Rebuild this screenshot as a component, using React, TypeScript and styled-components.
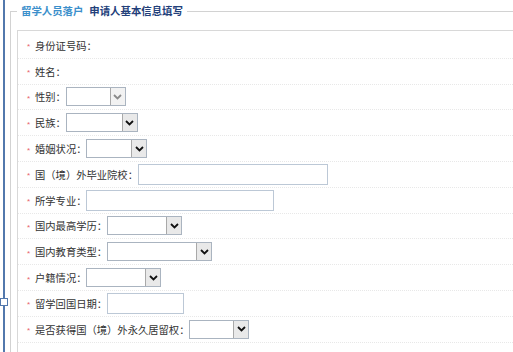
import styled, { createGlobalStyle } from "styled-components";

type Field = {
  label: string;
  kind?: "select" | "input";
  width?: number;
  muted?: boolean;
};

const fields: Field[] = [
  { label: "身份证号码：" },
  { label: "姓名：" },
  { label: "性别：", kind: "select", width: 60, muted: true },
  { label: "民族：", kind: "select", width: 72 },
  { label: "婚姻状况：", kind: "select", width: 61 },
  { label: "国（境）外毕业院校：", kind: "input", width: 190 },
  { label: "所学专业：", kind: "input", width: 188 },
  { label: "国内最高学历：", kind: "select", width: 75 },
  { label: "国内教育类型：", kind: "select", width: 105 },
  { label: "户籍情况：", kind: "select", width: 75 },
  { label: "留学回国日期：", kind: "input", width: 77 },
  { label: "是否获得国（境）外永久居留权：", kind: "select", width: 60 },
];

const Chevron = () => (
  <svg width="9" height="6" viewBox="0 0 9 6">
    <path d="M1 1 L4.5 4.5 L8 1" fill="none" stroke="currentColor" strokeWidth="1.8" />
  </svg>
);

const App = () => {
  return (
    <Page>
      <GlobalStyle />
      <Rail>
        <Handle />
      </Rail>
      <Group>
        <Legend>
          <Accent>留学人员落户</Accent>申请人基本信息填写
        </Legend>
        <Sheet>
          {fields.map((f) => (
            <Row key={f.label}>
              <Star>*</Star>
              <span>{f.label}</span>
              {f.kind === "select" && (
                <SelectBox $w={f.width ?? 60}>
                  <NativeSelect defaultValue="" />
                  <Arrow $muted={f.muted}>
                    <Chevron />
                  </Arrow>
                </SelectBox>
              )}
              {f.kind === "input" && <TextInput type="text" $w={f.width ?? 100} />}
            </Row>
          ))}
        </Sheet>
      </Group>
    </Page>
  );
};

const GlobalStyle = createGlobalStyle`
  html, body {
    margin: 0;
    background: #fff;
    overflow: hidden;
  }
  body {
    font-family: "Noto Sans CJK SC", "Noto Sans", sans-serif;
  }
`;

const Page = styled.div`
  display: flex;
  height: 352px;
  padding-left: 3px;
  overflow: hidden;
`;

const Rail = styled.div`
  position: relative;
  flex-shrink: 0;
  width: 0;
  border-left: 2px solid #5278ad;
`;

const Handle = styled.span`
  position: absolute;
  left: -5px;
  top: 298px;
  width: 6px;
  height: 6px;
  border: 1px solid #5278ad;
  background: #fff;
`;

const Group = styled.fieldset`
  flex-shrink: 0;
  width: 600px;
  min-width: 0;
  margin: 0 0 0 5px;
  padding: 0 0 0 6px;
  border: 1px solid #d2d2d2;
  border-right: none;
  border-bottom: none;
`;

const Legend = styled.legend`
  margin-left: 0;
  padding: 0 4px;
  line-height: 22px;
  font-size: 10.4px;
  font-weight: bold;
  color: #22407a;
`;

const Accent = styled.span`
  color: #3b8fcb;
  margin-right: 6px;
`;

const Sheet = styled.div`
  margin-top: 8px;
  padding-top: 2px;
  height: 400px;
  border-top: 1px solid #d8d8d8;
  border-left: 1px solid #d8d8d8;
`;

const Row = styled.div`
  display: flex;
  align-items: center;
  box-sizing: border-box;
  height: 25.8px;
  padding-left: 9px;
  border-bottom: 1px dotted #e8e8e8;
  font-size: 10.3px;
  color: #333;
  white-space: nowrap;
`;

const Star = styled.span`
  width: 8px;
  color: #e8646a;
  font-family: "Liberation Sans", sans-serif;
  font-size: 8px;
  line-height: 1;
  transform: translateY(2px);
`;

const SelectBox = styled.div<{ $w: number }>`
  display: flex;
  box-sizing: border-box;
  width: ${(p) => p.$w}px;
  height: 19px;
  border: 1px solid #aab4c0;
  background: #fff;
`;

const NativeSelect = styled.select`
  flex: 1;
  min-width: 0;
  border: none;
  background: transparent;
  appearance: none;
  outline: none;
`;

const Arrow = styled.span<{ $muted?: boolean }>`
  display: flex;
  align-items: center;
  justify-content: center;
  width: 14px;
  background: ${(p) => (p.$muted ? "#f2f2f2" : "#e9e9e9")};
  border-left: 1px solid #a9a9a9;
  color: ${(p) => (p.$muted ? "#8a8a8a" : "#111")};
`;

const TextInput = styled.input<{ $w: number }>`
  box-sizing: border-box;
  width: ${(p) => p.$w}px;
  height: 21px;
  padding: 0 4px;
  border: 1px solid #bcc8d6;
  outline: none;
`;

export default App;
